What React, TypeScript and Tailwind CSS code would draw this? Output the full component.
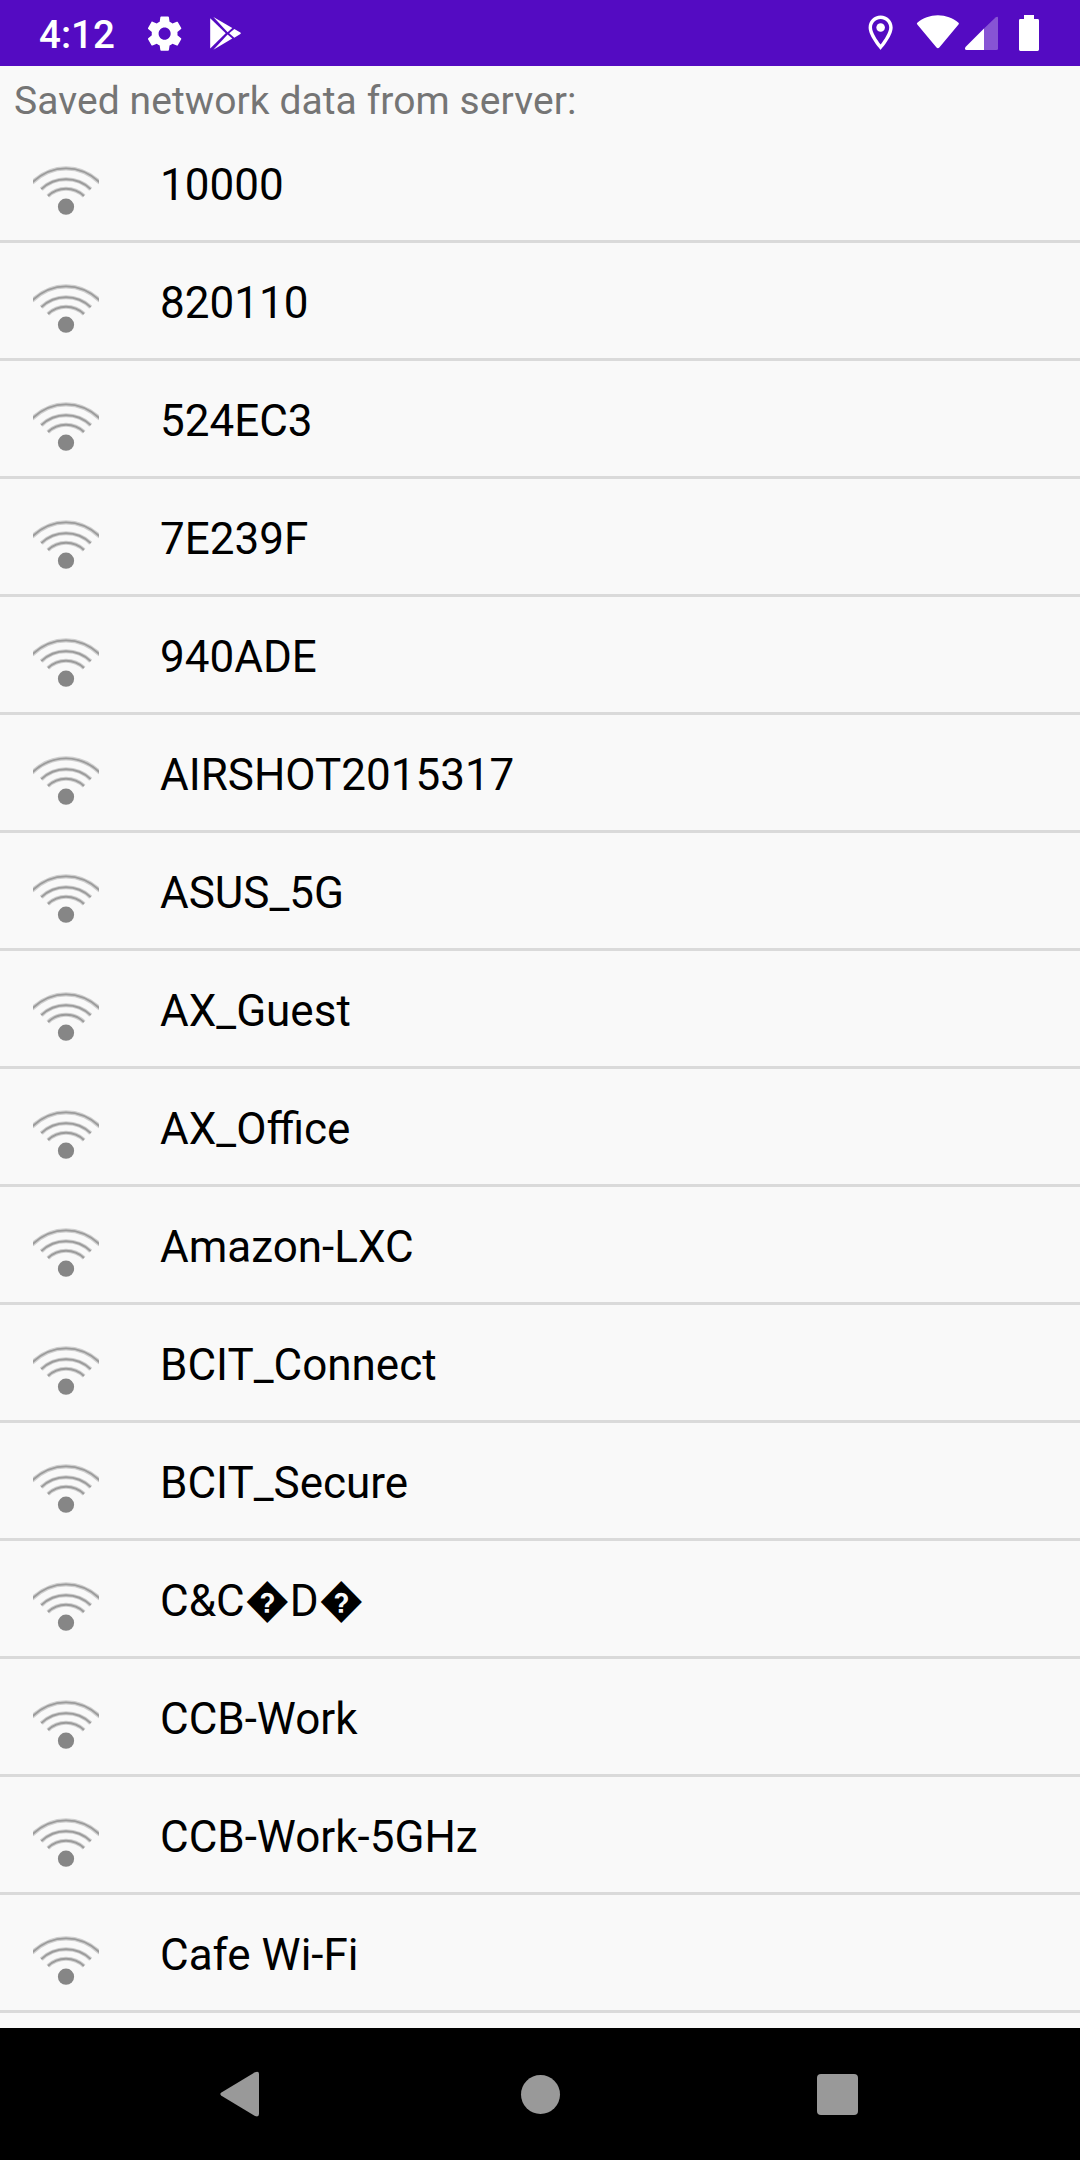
const networks = [
  '10000',
  '820110',
  '524EC3',
  '7E239F',
  '940ADE',
  'AIRSHOT2015317',
  'ASUS_5G',
  'AX_Guest',
  'AX_Office',
  'Amazon-LXC',
  'BCIT_Connect',
  'BCIT_Secure',
  'C&C\uFFFDD\uFFFD',
  'CCB-Work',
  'CCB-Work-5GHz',
  'Cafe Wi-Fi',
];

function SettingsIcon() {
  return (
    <svg className="ml-[30px] mt-[12.7px] h-[41.25px] w-[41.25px]" viewBox="0 0 24 24" fill="#fff">
      <path d="M19.43 12.98c.04-.32.07-.64.07-.98s-.03-.66-.07-.98l2.11-1.65c.19-.15.24-.42.12-.64l-2-3.46c-.12-.22-.39-.3-.61-.22l-2.49 1c-.52-.4-1.08-.73-1.69-.98l-.38-2.65C14.46 2.18 14.25 2 14 2h-4c-.25 0-.46.18-.49.42l-.38 2.65c-.61.25-1.17.59-1.69.98l-2.49-1c-.23-.09-.49 0-.61.22l-2 3.46c-.13.22-.07.49.12.64l2.11 1.65c-.04.32-.07.65-.07.98s.03.66.07.98l-2.11 1.65c-.19.15-.24.42-.12.64l2 3.46c.12.22.39.3.61.22l2.49-1c.52.4 1.08.73 1.69.98l.38 2.65c.03.24.24.42.49.42h4c.25 0 .46-.18.49-.42l.38-2.65c.61-.25 1.17-.59 1.69-.98l2.49 1c.23.09.49 0 .61-.22l2-3.46c.12-.22.07-.49-.12-.64l-2.11-1.65zM12 15.5c-1.93 0-3.5-1.57-3.5-3.5s1.57-3.5 3.5-3.5 3.5 1.57 3.5 3.5-1.57 3.5-3.5 3.5z" />
    </svg>
  );
}

function PlayStoreIcon() {
  return (
    <svg className="ml-[24px] mt-[16px] h-[36px] w-[34px]" viewBox="0 0 34 36" fill="#fff">
      <path d="M1.2 2.2 16.7 17.3 1.2 32.4Z" />
      <path d="M4.4 .9 23.3 12 18.6 16.2Z" />
      <path d="M4.4 33.8 23.3 22.6 18.6 18.4Z" />
      <path d="M20.2 17.3 25.3 12.9 31.4 16.5Q32.4 17.3 31.4 18.1L25.3 21.7Z" />
    </svg>
  );
}

function LocationIcon() {
  return (
    <svg className="mt-[12px] h-[41.25px] w-[41.25px]" viewBox="0 0 24 24" fill="#fff">
      <path d="M12 2C8.13 2 5 5.13 5 9c0 5.25 7 13 7 13s7-7.75 7-13c0-3.87-3.13-7-7-7zM7 9c0-2.76 2.24-5 5-5s5 2.24 5 5c0 2.88-2.88 7.19-5 9.88C9.92 16.21 7 11.85 7 9z" />
      <circle cx="12" cy="9" r="2.5" />
    </svg>
  );
}

function SignalIcons() {
  return (
    <>
      <svg className="ml-[15px] mt-[14px] h-[36px] w-[44px]" viewBox="0 0 44 36" fill="#fff">
        <path d="M1.3 10.400Q.4 9.500 1.300 8.700C7 4 14 1.200 21.900 1.200S36.800 4 42.500 8.700Q43.400 9.500 42.500 10.400L23.300 33.600Q21.900 35 20.500 33.600Z" />
      </svg>
      <svg className="ml-[4px] mt-[16px] h-[35px] w-[35px]" viewBox="0 0 35 35" fill="#fff">
        <path fillOpacity=".3" d="M20 12.500 31.500 1.500Q34 0 34 2V32.500Q34 34 32.500 34H20Z" />
        <path d="M20 12.500V34H2.500Q0 33.500 1.500 31Z" />
      </svg>
      <svg className="ml-[20px] mt-[15px] h-[36px] w-[20px]" viewBox="0 0 20 36" fill="#fff">
        <path d="M5 0H15V4H18.600Q20 4 20 5.400V34.600Q20 36 18.600 36H1.400Q0 36 0 34.600V5.400Q0 4 1.400 4H5Z" />
      </svg>
    </>
  );
}

const arcs = [
  'M32 57.700C52 38.600 80 38.600 100 57.700',
  'M41.300 64.200C55 50.900 77 50.900 90.700 64.200',
  'M48 71C58 61.300 74 61.300 84 71',
];

function NetworkIcon() {
  return (
    <svg
      className="ml-[9px] mt-[35px] h-[60px] w-[66px] shrink-0"
      viewBox="33 35 66 60"
      fill="none"
      stroke="#808080"
    >
      {arcs.map((d) => (
        <g key={d}>
          <path d={d} strokeWidth="4.2" strokeOpacity=".35" />
          <path d={d} strokeWidth="1.8" strokeOpacity=".65" />
        </g>
      ))}
      <circle cx="66" cy="81.700" r="8.1" fill="#868686" stroke="none" />
    </svg>
  );
}

export default function App() {
  return (
    <div className="flex h-[2160px] w-[1080px] flex-col overflow-hidden bg-[#f9f9f9] font-['Roboto',sans-serif]">
      <header className="flex h-[66px] shrink-0 items-start bg-[#540bc2] text-white">
        <span className="ml-[39px] w-[75px] whitespace-nowrap pt-[2px] text-[38.5px] font-medium leading-[66px]">
          4:12
        </span>
        <SettingsIcon />
        <PlayStoreIcon />
        <div className="ml-auto mr-[41px] flex items-start">
          <LocationIcon />
          <SignalIcons />
        </div>
      </header>
      <main className="flex flex-1 flex-col">
        <p className="h-[59px] shrink-0 pl-[14px] pt-[5px] text-[39px] leading-[60px] tracking-[0.08px] whitespace-nowrap text-[#757575]">
          Saved network data from server:
        </p>
        <ul>
          {networks.map((name) => (
            <li key={name} className="flex h-[118px] items-start border-b-3 border-[#dadada] pl-[24px]">
              <NetworkIcon />
              <span className="pl-[61px] pt-[5px] text-[44px] leading-[110px] whitespace-nowrap text-black">
                {name}
              </span>
            </li>
          ))}
        </ul>
      </main>
      <nav className="flex h-[132px] shrink-0 items-center bg-black pl-[218px]">
        <svg className="h-[46px] w-[44px]" viewBox="0 0 44 46" fill="#999">
          <path d="M3.400 21.400Q1.200 23 3.400 24.800L37 45Q41 46.500 41 43V3Q41 -.5 37 1.200Z" />
        </svg>
        <div className="ml-[259px] h-[39px] w-[39px] rounded-full bg-[#999]" />
        <div className="ml-[257px] h-[41px] w-[41px] rounded-[4px] bg-[#999]" />
      </nav>
    </div>
  );
}
